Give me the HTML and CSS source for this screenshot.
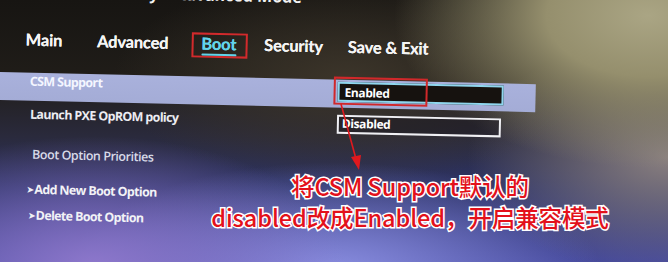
FILE: index.html
```html
<!DOCTYPE html>
<html lang="zh">
<head>
<meta charset="utf-8">
<title>BIOS Boot</title>
<link rel="stylesheet" href="styles.css">
</head>
<body>
<div class="screen">
  <div class="bios">
    <div class="mode">UEFI BIOS Utility – Advanced Mode</div>
    <nav class="tabs">
      <span class="tab">Main</span>
      <span class="tab">Advanced</span>
      <span class="tab active">Boot</span>
      <span class="tab">Security</span>
      <span class="tab">Save &amp; Exit</span>
    </nav>
    <div class="rows">
      <div class="row selected">
        <span class="label">CSM Support</span>
        <span class="value enabled">Enabled</span>
      </div>
      <div class="row pxe">
        <span class="label">Launch PXE OpROM policy</span>
        <span class="value disabled">Disabled</span>
      </div>
      <div class="row heading"><span class="label">Boot Option Priorities</span></div>
      <div class="row link add"><span class="chev">➤</span><span class="label">Add New Boot Option</span></div>
      <div class="row link del"><span class="chev">➤</span><span class="label">Delete Boot Option</span></div>
    </div>
  </div>
  <svg class="arrow" width="668" height="262" viewBox="0 0 668 262">
    <line x1="341" y1="104" x2="356" y2="159" stroke="#e0191e" stroke-width="1.6"/>
    <polygon points="359,170 351,157 361,155" fill="#e0191e"/>
  </svg>
  <div class="note">将CSM Support默认的<br>disabled改成Enabled，开启兼容模式</div>
</div>
</body>
</html>
```

FILE: styles.css
```css
html, body {
  margin: 0;
  padding: 0;
}

body {
  width: 668px;
  height: 262px;
  overflow: hidden;
  background: #1c1a17;
}

.screen {
  position: relative;
  width: 668px;
  height: 262px;
  overflow: hidden;
  font-family: "Open Sans", "Noto Sans", sans-serif;
  background:
    radial-gradient(ellipse 38% 58% at 97% 6%, #aaa584 0%, #958f6d 40%, rgba(140,130,100,0) 100%),
    radial-gradient(ellipse 30% 45% at 100% 60%, #8a8080 0%, rgba(130,120,120,0) 100%),
    radial-gradient(ellipse 38% 50% at 14% 102%, #8e78cc 0%, rgba(120,100,190,0) 100%),
    radial-gradient(ellipse 40% 42% at 50% 104%, #8a8ee0 0%, rgba(100,110,210,0) 100%),
    radial-gradient(ellipse 35% 40% at 52% 30%, #3c352a 0%, rgba(60,52,40,0) 100%),
    linear-gradient(180deg, #171512 0%, #201d19 30%, #2a2a3c 52%, #2e3468 72%, #44489c 100%);
}

.bios {
  width: 668px;
  transform: rotate(1.3deg);
  transform-origin: 0 0;
}

.mode {
  width: 302px;
  height: 14px;
  margin-top: -17px;
  line-height: 14px;
  font-size: 16px;
  font-weight: 700;
  color: #f2f2f2;
  text-align: right;
  white-space: nowrap;
}

.tabs {
  display: flex;
  gap: 25px;
  height: 20px;
  margin-top: 32px;
  padding-left: 27px;
}

.tab {
  position: relative;
  font-family: "Lato", "Open Sans", sans-serif;
  font-size: 16.5px;
  line-height: 20px;
  font-weight: 700;
  letter-spacing: -0.2px;
  color: #f4f4f4;
  white-space: nowrap;
  text-shadow: 0 0 0.4px #f4f4f4;
}

.tab:nth-child(1) {
  margin-right: 10px;
}

.tab:nth-child(2) {
  margin-right: 8px;
}

.tab:nth-child(3) {
  margin-right: 3px;
}

.tab.active {
  color: #62d4ea;
  text-shadow: 0 0 0.4px #62d4ea;
}

.tab.active::after {
  content: "";
  position: absolute;
  left: 0;
  right: 0;
  top: 20px;
  height: 2px;
  background: #62d4ea;
  border-radius: 1px;
}

.tab.active::before {
  content: "";
  position: absolute;
  left: -10px;
  right: -11px;
  top: -1px;
  height: 21px;
  border: 2px solid #d22a2c;
}

.rows {
  display: flex;
  flex-direction: column;
  margin-top: 23px;
}

.row {
  display: flex;
  align-items: flex-start;
}

.label {
  font-size: 12.5px;
  line-height: 14px;
  font-weight: 700;
  letter-spacing: -0.65px;
  color: #ececf2;
  white-space: nowrap;
}

.row.selected {
  height: 28px;
  width: 558px;
  margin-left: -20px;
  padding-left: 52px;
  box-sizing: border-box;
  background: linear-gradient(180deg, #a9b1dc 0%, #a4acd6 100%);
}

.row.selected .label {
  width: 308px;
  padding-top: 2px;
  color: #f4f6ff;
}

.row.pxe {
  height: 21px;
  margin-top: 7px;
  padding-left: 33px;
}

.row.pxe .label {
  width: 307px;
}

.value {
  position: relative;
  box-sizing: border-box;
  width: 166px;
  font-size: 12px;
  font-weight: 700;
  letter-spacing: -0.4px;
  color: #ffffff;
  white-space: nowrap;
}

.value.enabled {
  height: 20px;
  margin-top: 2px;
  padding: 1px 0 0 5px;
  line-height: 15px;
  background: #16120f;
  border: 2px solid #8fd6ee;
}

.value.enabled::after {
  content: "";
  position: absolute;
  left: -6px;
  top: -7px;
  width: 90px;
  height: 24px;
  border: 2px solid #d0282a;
}

.value.disabled {
  width: 164px;
  height: 19px;
  margin-top: 0;
  padding: 0 0 0 3px;
  line-height: 13px;
  background: rgba(20, 18, 30, 0.35);
  border: 2px solid #f0f0f4;
}

.row.heading {
  margin-top: 19px;
  padding-left: 36px;
}

.row.heading .label {
  font-weight: 600;
  letter-spacing: -0.45px;
  color: #d8dae8;
}

.row.link {
  align-items: center;
}

.row.add {
  margin-top: 21px;
  padding-left: 31px;
}

.row.del {
  margin-top: 12px;
  padding-left: 33px;
}

.chev {
  font-family: "DejaVu Sans", sans-serif;
  font-size: 9.5px;
  line-height: 14px;
  color: #f0f0f4;
  margin-right: 0;
}

.row.link .label {
  color: #f2f2f6;
}

.arrow {
  position: absolute;
  left: 0;
  top: 0;
  pointer-events: none;
}

.note {
  position: absolute;
  left: 204px;
  top: 171px;
  width: 412px;
  text-align: center;
  font-family: "Noto Sans CJK SC", "Noto Sans", sans-serif;
  font-size: 23.5px;
  line-height: 31px;
  font-weight: 500;
  letter-spacing: -0.1px;
  color: #e3111b;
  white-space: nowrap;
  -webkit-text-stroke: 3px #ffffff;
  paint-order: stroke fill;
}
```
